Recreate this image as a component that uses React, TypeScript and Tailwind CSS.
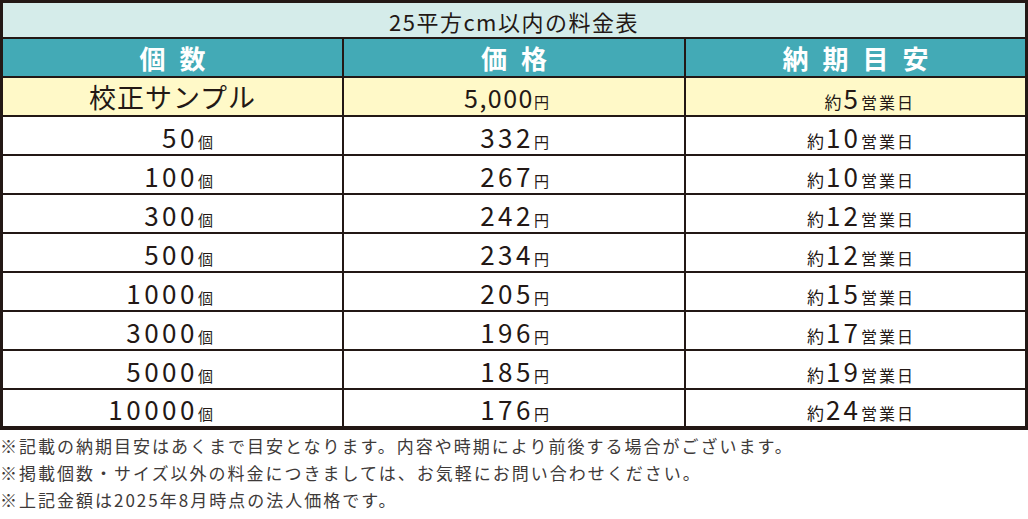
const rows = [
  { qty: '50', price: '332', days: '10' },
  { qty: '100', price: '267', days: '10' },
  { qty: '300', price: '242', days: '12' },
  { qty: '500', price: '234', days: '12' },
  { qty: '1000', price: '205', days: '15' },
  { qty: '3000', price: '196', days: '17' },
  { qty: '5000', price: '185', days: '19' },
  { qty: '10000', price: '176', days: '24' },
];

const notes = [
  '※記載の納期目安はあくまで目安となります。内容や時期により前後する場合がございます。',
  '※掲載個数・サイズ以外の料金につきましては、お気軽にお問い合わせください。',
  '※上記金額は2025年8月時点の法人価格です。',
];

const font = "font-['Noto_Sans_CJK_JP','Noto_Sans',sans-serif]";

function Days({ n }: { n: string }) {
  return (
    <div className="flex items-baseline justify-end pr-[112px] leading-none">
      <span className="text-[17px] mr-[2px]">約</span>
      <span className="text-[26px] tracking-[3px]">{n}</span>
      <span className="text-[16px] tracking-[2px] -mr-[2px]">営業日</span>
    </div>
  );
}

export default function App() {
  return (
    <div className={`w-[1028px] h-[519px] bg-white text-[#231815] ${font}`}>
      <div className="border-[3px] border-b-4 border-[#231815] bg-[#231815]">
        <div className="grid grid-cols-[339px_340px_339px] gap-[2px]">
          <div className="col-span-3 h-[34px] bg-[#d5ecea] flex items-center justify-center text-[22px] tracking-[1.5px] leading-none pt-[1px]">
            25平方cm以内の料金表
          </div>

          {['個数', '価格', '納期目安'].map((h) => (
            <div
              key={h}
              className="h-[37px] bg-[#43aab6] flex items-center justify-center text-white font-bold text-[26px] tracking-[14px] pl-[14px] leading-none"
            >
              {h}
            </div>
          ))}

          <div className="h-[37px] bg-[#fff9c8] flex items-center justify-center text-[27px] tracking-[1px] leading-none">
            校正サンプル
          </div>
          <div className="h-[37px] bg-[#fff9c8] flex items-center">
            <div className="w-full flex items-baseline justify-end pr-[135px] leading-none pt-[2px]">
              <span className="text-[25px] tracking-[1.5px]">5,000</span>
              <span className="text-[15px]">円</span>
            </div>
          </div>
          <div className="h-[37px] bg-[#fff9c8] flex items-center">
            <div className="w-full pt-[2px]">
              <Days n="5" />
            </div>
          </div>

          {rows.map((r, i) => {
            const h = i === rows.length - 1 ? 'h-[36px]' : 'h-[37px]';
            return [
              <div key={`q${i}`} className={`${h} bg-white flex items-center`}>
                <div className="w-full flex items-baseline justify-end pr-[129px] leading-none pt-[2px]">
                  <span className="text-[26px] tracking-[3.5px]">{r.qty}</span>
                  <span className="text-[15px]">個</span>
                </div>
              </div>,
              <div key={`p${i}`} className={`${h} bg-white flex items-center`}>
                <div className="w-full flex items-baseline justify-end pr-[135px] leading-none pt-[2px]">
                  <span className="text-[26px] tracking-[3.5px]">{r.price}</span>
                  <span className="text-[15px]">円</span>
                </div>
              </div>,
              <div key={`d${i}`} className={`${h} bg-white flex items-center`}>
                <div className="w-full pt-[2px]">
                  <Days n={r.days} />
                </div>
              </div>,
            ];
          })}
        </div>
      </div>

      <div className="pt-[2px] text-[17px] tracking-[2px] leading-[27px] text-[#3e3a39] whitespace-nowrap">
        {notes.map((n) => (
          <div key={n}>{n}</div>
        ))}
      </div>
    </div>
  );
}
